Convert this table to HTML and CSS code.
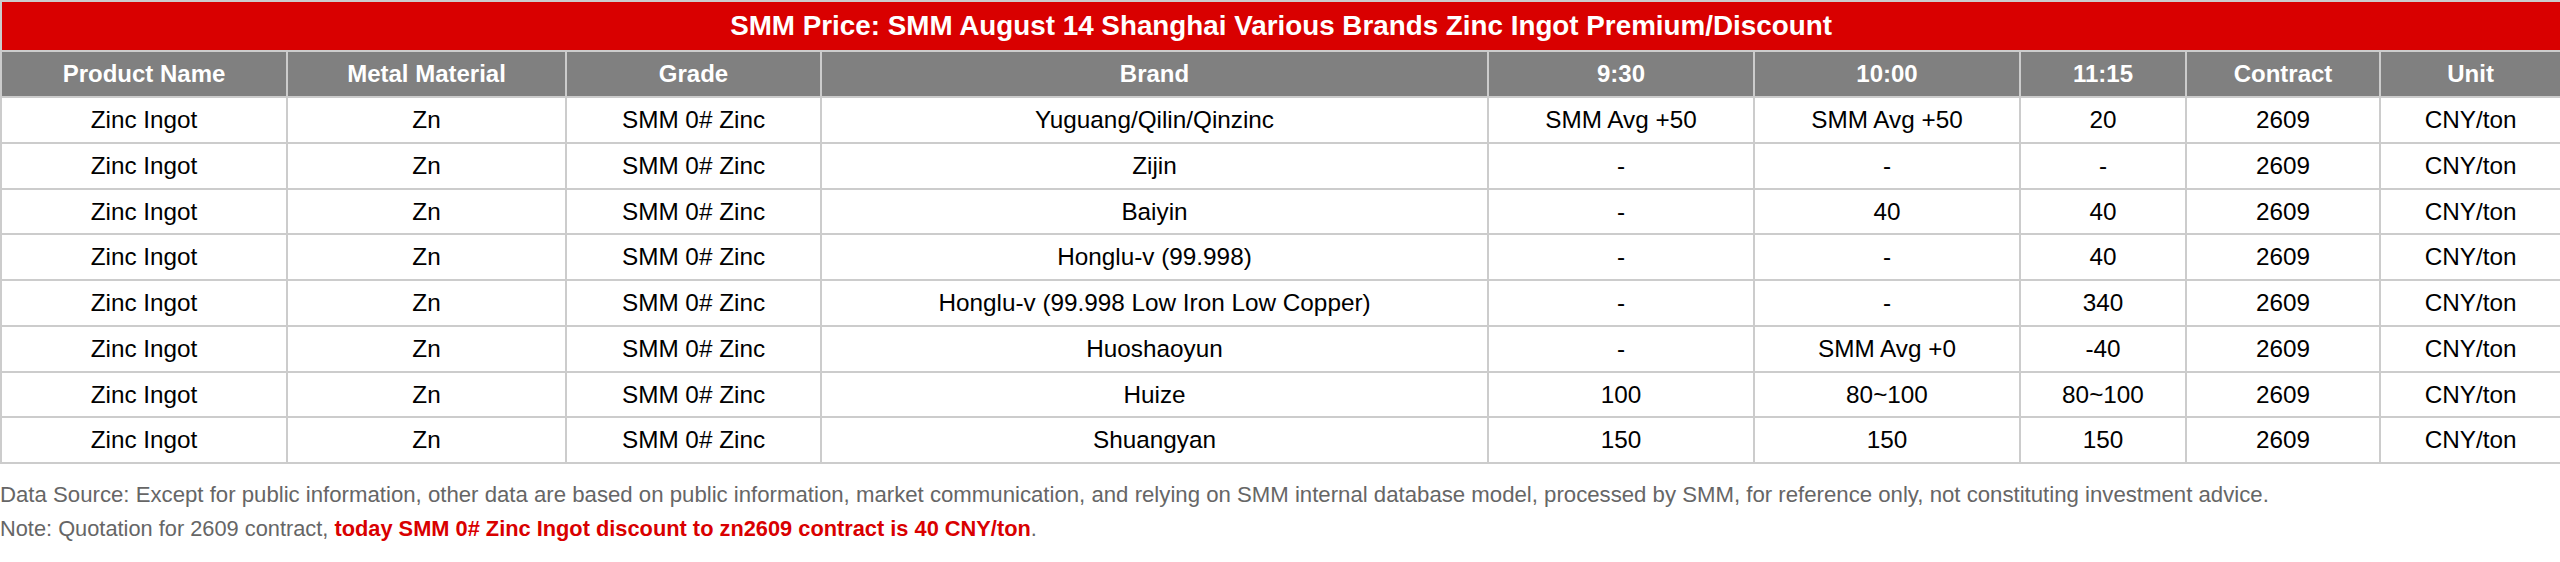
FILE: index.html
```html
<!DOCTYPE html>
<html lang="en">
<head>
<meta charset="utf-8">
<title>SMM Price</title>
<link rel="stylesheet" href="styles.css">
</head>
<body>
<table class="price-table">
  <colgroup>
    <col class="c-product">
    <col class="c-metal">
    <col class="c-grade">
    <col class="c-brand">
    <col class="c-t1">
    <col class="c-t2">
    <col class="c-t3">
    <col class="c-contract">
    <col class="c-unit">
  </colgroup>
  <thead>
    <tr class="title-row"><th colspan="9">SMM Price: SMM August 14 Shanghai Various Brands Zinc Ingot Premium/Discount</th></tr>
    <tr class="head-row">
      <th>Product Name</th><th>Metal Material</th><th>Grade</th><th>Brand</th><th>9:30</th><th>10:00</th><th>11:15</th><th>Contract</th><th>Unit</th>
    </tr>
  </thead>
  <tbody>
    <tr><td>Zinc Ingot</td><td>Zn</td><td>SMM 0# Zinc</td><td>Yuguang/Qilin/Qinzinc</td><td>SMM Avg +50</td><td>SMM Avg +50</td><td>20</td><td>2609</td><td>CNY/ton</td></tr>
    <tr><td>Zinc Ingot</td><td>Zn</td><td>SMM 0# Zinc</td><td>Zijin</td><td>-</td><td>-</td><td>-</td><td>2609</td><td>CNY/ton</td></tr>
    <tr><td>Zinc Ingot</td><td>Zn</td><td>SMM 0# Zinc</td><td>Baiyin</td><td>-</td><td>40</td><td>40</td><td>2609</td><td>CNY/ton</td></tr>
    <tr><td>Zinc Ingot</td><td>Zn</td><td>SMM 0# Zinc</td><td>Honglu-v (99.998)</td><td>-</td><td>-</td><td>40</td><td>2609</td><td>CNY/ton</td></tr>
    <tr><td>Zinc Ingot</td><td>Zn</td><td>SMM 0# Zinc</td><td>Honglu-v (99.998 Low Iron Low Copper)</td><td>-</td><td>-</td><td>340</td><td>2609</td><td>CNY/ton</td></tr>
    <tr><td>Zinc Ingot</td><td>Zn</td><td>SMM 0# Zinc</td><td>Huoshaoyun</td><td>-</td><td>SMM Avg +0</td><td>-40</td><td>2609</td><td>CNY/ton</td></tr>
    <tr><td>Zinc Ingot</td><td>Zn</td><td>SMM 0# Zinc</td><td>Huize</td><td>100</td><td>80~100</td><td>80~100</td><td>2609</td><td>CNY/ton</td></tr>
    <tr><td>Zinc Ingot</td><td>Zn</td><td>SMM 0# Zinc</td><td>Shuangyan</td><td>150</td><td>150</td><td>150</td><td>2609</td><td>CNY/ton</td></tr>
  </tbody>
</table>
<div class="notes">
  <p class="note">Data Source: Except for public information, other data are based on public information, market communication, and relying on SMM internal database model, processed by SMM, for reference only, not constituting investment advice.</p>
  <p class="note note-small">Note: Quotation for 2609 contract, <strong class="hl">today SMM 0# Zinc Ingot discount to zn2609 contract is 40 CNY/ton</strong>.</p>
</div>
</body>
</html>
```

FILE: styles.css
```css
html, body {
  margin: 0;
  padding: 0;
  background: #fff;
}
body {
  font-family: "Liberation Sans", Arial, sans-serif;
  color: #000;
}
.price-table {
  width: 2560px;
  table-layout: fixed;
  border-collapse: collapse;
  font-size: 24.3px;
}
.c-product { width: 286px; }
.c-metal { width: 279px; }
.c-grade { width: 255px; }
.c-brand { width: 667px; }
.c-t1 { width: 266px; }
.c-t2 { width: 266px; }
.c-t3 { width: 166px; }
.c-contract { width: 194px; }
.c-unit { width: 181px; }

.price-table th,
.price-table td {
  border: 2px solid #cccccc;
  text-align: center;
  padding: 0 4px;
  white-space: nowrap;
}
.title-row th {
  background: #d90000;
  color: #fff;
  font-weight: bold;
  font-size: 27.8px;
  line-height: 48px;
}
.head-row th {
  background: #808080;
  color: #fff;
  font-weight: bold;
  font-size: 24px;
  line-height: 44px;
}
.price-table td {
  line-height: 43.75px;
}
.notes {
  padding-top: 14px;
}
.note {
  margin: 0;
  font-size: 22.2px;
  line-height: 34px;
  color: #666666;
}
.note-small {
  font-size: 21.8px;
}
.hl {
  color: #d90000;
  font-weight: bold;
  font-size: 21.8px;
}
```
